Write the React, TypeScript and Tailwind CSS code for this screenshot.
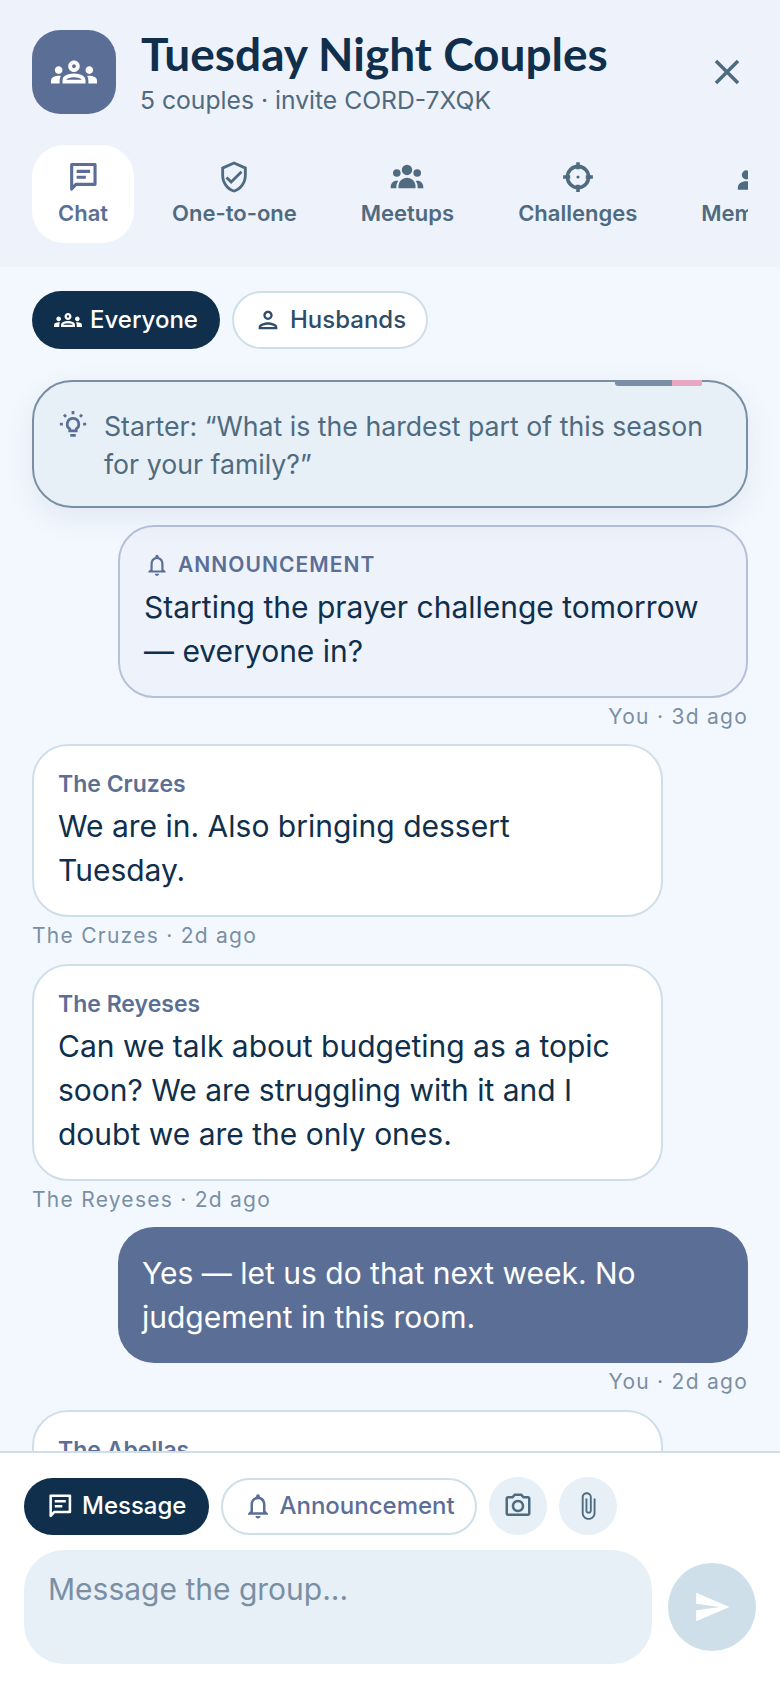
import {
  MdClose,
  MdOutlineGroups,
  MdOutlineNotifications,
  MdOutlineAttachFile,
  MdOutlinePerson,
  MdOutlinePhotoCamera,
  MdOutlineVerifiedUser,
  MdSend,
} from "react-icons/md";

const inter = "font-['Inter',sans-serif]";

function ChatIcon({ className }: { className?: string }) {
  return (
    <svg viewBox="0 0 24 24" fill="none" stroke="currentColor" strokeWidth="2.2" className={className}>
      <path d="M4 3.200h16.500v14H7l-3 3.300Z" strokeLinejoin="round" />
      <path d="M7.500 8h9.500M7.500 12.200h6.500" />
    </svg>
  );
}

function GroupIcon({ className }: { className?: string }) {
  return (
    <svg viewBox="0 0 24 24" fill="currentColor" className={className}>
      <circle cx="12" cy="7" r="3.700" />
      <circle cx="4.800" cy="9.200" r="2.700" />
      <circle cx="19.200" cy="9.200" r="2.700" />
      <path d="M6 20v-1.500c0-3.200 2.700-6 6-6s6 2.800 6 6V20Z" />
      <path d="M0.500 20v-1.200c0-2.300 1.800-4.200 4-4.200.6 0 1 .1 1.400.2-.9 1.100-1.400 2.500-1.400 3.900V20Z" />
      <path d="M23.500 20v-1.200c0-2.300-1.800-4.200-4-4.200-.6 0-1 .1-1.400.2.900 1.100 1.400 2.500 1.400 3.900V20Z" />
    </svg>
  );
}

function CoupleIcon({ className }: { className?: string }) {
  return (
    <svg viewBox="0 0 24 24" fill="currentColor" className={className}>
      <circle cx="8" cy="10.500" r="3.200" />
      <circle cx="14" cy="6" r="3" />
      <path d="M2 21v-1.500c0-2.800 2.700-4.500 6-4.500s6 1.700 6 4.500V21Z" />
    </svg>
  );
}

function TargetIcon({ className }: { className?: string }) {
  return (
    <svg viewBox="0 0 24 24" fill="none" stroke="currentColor" strokeWidth="2.500" className={className}>
      <circle cx="12" cy="12" r="7.500" />
      <path d="M12 1.500v5M12 17.500v5M1.500 12h5M17.500 12h5" />
      <circle cx="12" cy="12" r="1.100" fill="currentColor" stroke="none" />
    </svg>
  );
}

function BulbIcon({ className }: { className?: string }) {
  return (
    <svg viewBox="0 0 24 24" fill="none" stroke="currentColor" strokeWidth="2.200" className={className}>
      <path d="M12 7.500a4.600 4.600 0 0 0-2.600 8.400v1.600h5.200v-1.600A4.600 4.600 0 0 0 12 7.500Z" />
      <path d="M9.800 21h4.400M12 1.500v2.600M4.800 4.500l1.600 1.800M19.200 4.500l-1.600 1.800M1.500 12h2.400M20.100 12h2.400" />
    </svg>
  );
}

const tabs = [
  { label: "Chat", Icon: ChatIcon, active: true },
  { label: "One-to-one", Icon: MdOutlineVerifiedUser },
  { label: "Meetups", Icon: GroupIcon },
  { label: "Challenges", Icon: TargetIcon },
  { label: "Members", Icon: CoupleIcon },
];

function Bubble({
  name,
  lines,
  meta,
}: {
  name: string;
  lines: string[];
  meta: string;
}) {
  return (
    <div className="flex flex-col items-start">
      <div className="w-[631px] rounded-[36px] border-2 border-[#cfdfe9] bg-white px-[24px] pt-[23px] pb-[23px]">
        <p className="text-[23px] leading-[30px] font-semibold text-[#5b6f96]">{name}</p>
        <div className="mt-[5px] text-[30px] leading-[44px] text-[#0f2f4c]">
          {lines.map((l) => (
            <span key={l} className="block">
              {l}
            </span>
          ))}
        </div>
      </div>
      <p className="mt-[4px] text-[21px] leading-[30px] tracking-[0.06em] text-[#7a8fa3]">{meta}</p>
    </div>
  );
}

export default function App() {
  return (
    <div className={`flex h-[1688px] w-[780px] flex-col overflow-hidden bg-[#f3f8ff] ${inter}`}>
      <header className="shrink-0 bg-[#eef2fb]">
        <div className="flex items-start pt-[30px] pr-[32px] pl-[32px]">
          <div className="flex h-[84px] w-[84px] shrink-0 items-center justify-center rounded-[28px] bg-[#5b6f96]">
            <MdOutlineGroups className="h-[46px] w-[46px] text-white" />
          </div>
          <div className="ml-[25px] flex-1">
            <h1 className="-mt-[1px] font-['Lato',sans-serif] text-[46px] leading-[50px] font-bold text-[#0f2f4c]">
              Tuesday Night Couples
            </h1>
            <p className="mt-[4px] -ml-[1px] text-[24.7px] leading-[34px] text-[#4f6b80]">
              5 couples · invite CORD-7XQK
            </p>
          </div>
          <MdClose className="mt-[21px] h-[42px] w-[42px] text-[#4f6b80]" />
        </div>
        <div className="mt-[28px] mr-[32px] ml-[32px] flex gap-[12px] overflow-hidden pb-[24px]">
          {tabs.map(({ label, Icon, active }) => (
            <div
              key={label}
              className={`flex h-[98px] shrink-0 flex-col items-center justify-center rounded-[32px] px-[26px] ${
                active ? "bg-white text-[#5b6f96]" : "text-[#4f6b80]"
              }`}
            >
              <Icon className="h-[34px] w-[34px]" />
              <span className="mt-[4px] text-[22px] leading-[30px] font-semibold whitespace-nowrap">{label}</span>
            </div>
          ))}
        </div>
      </header>

      <main className="min-h-0 flex-1 overflow-hidden px-[32px] pt-[24px]">
        <div className="flex gap-[12px]">
          <div className="flex h-[58px] items-center gap-[8px] rounded-full bg-[#0f2f4c] pr-[22px] pl-[22px] text-[24px] font-medium text-white">
            <MdOutlineGroups className="h-[28px] w-[28px]" />
            Everyone
          </div>
          <div className="flex h-[58px] items-center gap-[8px] rounded-full border-2 border-[#cfdfe9] bg-white pr-[20px] pl-[20px] text-[24px] font-medium text-[#2f4d68]">
            <MdOutlinePerson className="h-[28px] w-[28px]" />
            Husbands
          </div>
        </div>

        <div className="relative mt-[31px] flex rounded-[40px] border-2 border-[#7a8fa3] bg-[#e7eff7] pt-[25px] pr-[24px] pb-[23px] pl-[24px] shadow-[0_10px_30px_rgba(15,47,76,0.08)]">
          <div className="absolute -top-[2px] right-[44px] h-[6px] w-[87px] overflow-hidden rounded-b-[3px] bg-[#7a8fa3]">
            <div className="ml-auto h-full w-[30px] bg-[#e8a8c2]" />
          </div>
          <BulbIcon className="mt-[2px] h-[30px] w-[30px] shrink-0 text-[#5b6f96]" />
          <p className="ml-[16px] text-[26.700px] leading-[38px] text-[#4f6b80]">
            Starter: “What is the hardest part of this season for your family?”
          </p>
        </div>

        <div className="mt-[17px] ml-[86px] flex flex-col items-end">
          <div className="w-full rounded-[36px] border-2 border-[#b5c1d9] bg-[#eef2fb] px-[24px] pt-[23px] pb-[23px]">
            <p className="flex items-center gap-[8px] text-[21px] leading-[30px] font-semibold tracking-[0.05em] text-[#5b6f96]">
              <MdOutlineNotifications className="h-[26px] w-[26px]" />
              ANNOUNCEMENT
            </p>
            <div className="mt-[5px] text-[30px] leading-[44px] text-[#0f2f4c]">
              <span className="block">Starting the prayer challenge tomorrow</span>
              <span className="block">— everyone in?</span>
            </div>
          </div>
          <p className="mt-[4px] text-[21px] leading-[30px] tracking-[0.06em] text-[#7a8fa3]">You · 3d ago</p>
        </div>

        <div className="mt-[12px] flex flex-col gap-[12.5px]">
          <Bubble name="The Cruzes" lines={["We are in. Also bringing dessert", "Tuesday."]} meta="The Cruzes · 2d ago" />
          <Bubble
            name="The Reyeses"
            lines={[
              "Can we talk about budgeting as a topic",
              "soon? We are struggling with it and I",
              "doubt we are the only ones.",
            ]}
            meta="The Reyeses · 2d ago"
          />
          <div className="ml-[86px] flex flex-col items-end">
            <div className="w-full rounded-[36px] bg-[#5b6f96] px-[24px] pt-[24px] pb-[24px] text-[30px] leading-[44px] text-white">
              <span className="block">Yes — let us do that next week. No</span>
              <span className="block">judgement in this room.</span>
            </div>
            <p className="mt-[4px] text-[21px] leading-[30px] tracking-[0.06em] text-[#7a8fa3]">You · 2d ago</p>
          </div>
          <Bubble name="The Abellas" lines={[]} meta="" />
        </div>
      </main>

      <footer className="h-[237px] shrink-0 border-t-2 border-[#cfdfe9] bg-white px-[24px] pt-[24px]">
        <div className="flex items-center gap-[12px]">
          <div className="flex h-[57px] items-center gap-[8px] rounded-full bg-[#0f2f4c] pr-[23px] pl-[22px] text-[24px] font-medium text-white">
            <ChatIcon className="h-[28px] w-[28px]" />
            Message
          </div>
          <div className="flex h-[57px] items-center gap-[6px] rounded-full border-2 border-[#cfdfe9] bg-white pr-[20px] pl-[20px] text-[24px] font-medium text-[#5b6f96]">
            <MdOutlineNotifications className="h-[30px] w-[30px]" />
            Announcement
          </div>
          <div className="flex h-[58px] w-[58px] items-center justify-center rounded-full bg-[#e7eff7] text-[#4f6b80]">
            <MdOutlinePhotoCamera className="h-[30px] w-[30px]" />
          </div>
          <div className="flex h-[58px] w-[58px] items-center justify-center rounded-full bg-[#e7eff7] text-[#4f6b80]">
            <MdOutlineAttachFile className="h-[30px] w-[30px]" />
          </div>
        </div>
        <div className="mt-[15px] flex items-center gap-[16px]">
          <div className="h-[114px] w-[629px] rounded-[40px] bg-[#e7eff7] px-[24px] pt-[19px] text-[30px] leading-[40px] text-[#7a8fa3]">
            Message the group...
          </div>
          <div className="flex h-[88px] w-[88px] items-center justify-center rounded-full bg-[#cfdfe9] text-white">
            <MdSend className="h-[38px] w-[38px]" />
          </div>
        </div>
      </footer>
    </div>
  );
}
